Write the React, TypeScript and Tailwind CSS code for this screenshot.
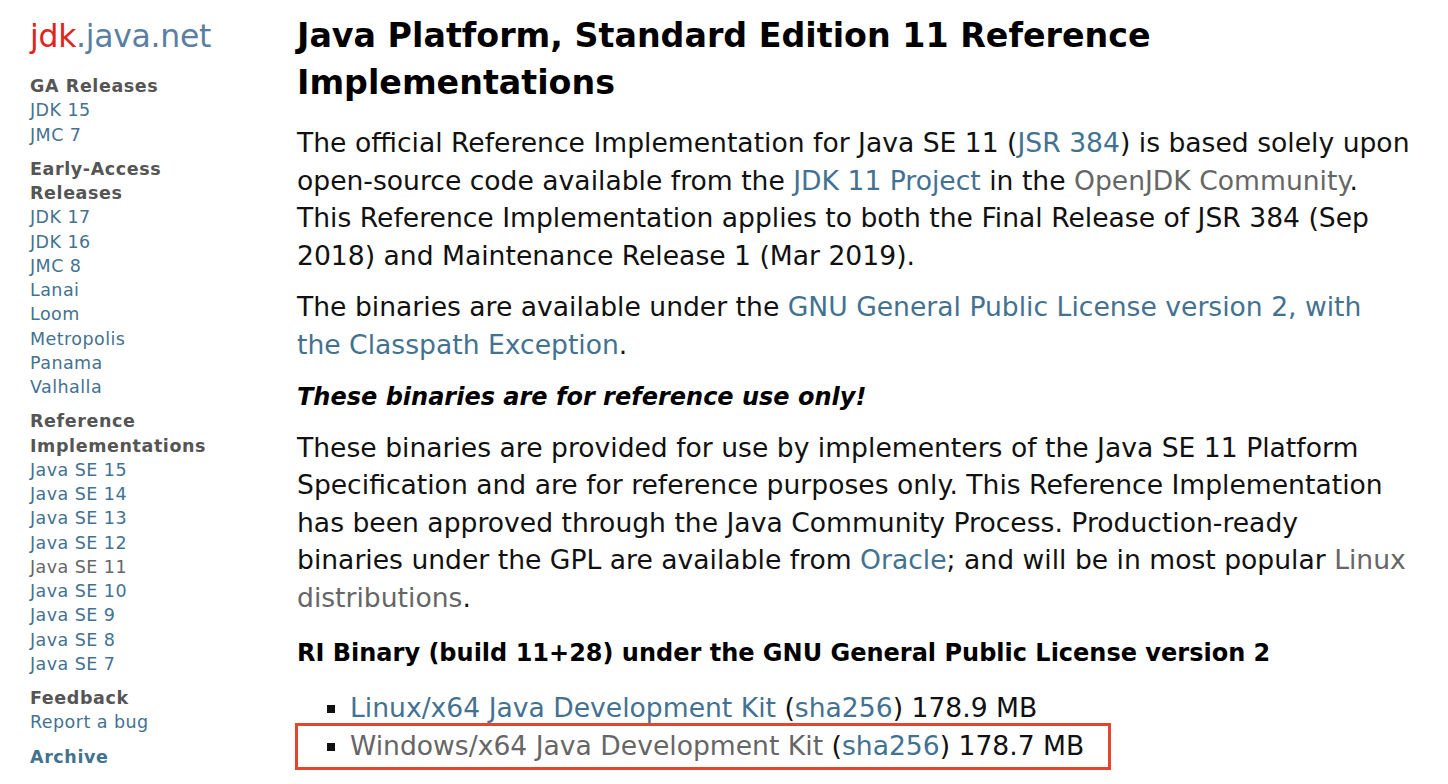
const link = "text-[#437291]";
const visited = "text-[#666666]";

const Sidebar = () => {
  const groups: { title: string[]; items: { label: string; seen?: boolean }[] }[] = [
    { title: ["GA Releases"], items: [{ label: "JDK 15" }, { label: "JMC 7" }] },
    {
      title: ["Early-Access", "Releases"],
      items: [
        { label: "JDK 17" },
        { label: "JDK 16" },
        { label: "JMC 8" },
        { label: "Lanai" },
        { label: "Loom" },
        { label: "Metropolis" },
        { label: "Panama" },
        { label: "Valhalla" },
      ],
    },
    {
      title: ["Reference", "Implementations"],
      items: [
        { label: "Java SE 15" },
        { label: "Java SE 14" },
        { label: "Java SE 13" },
        { label: "Java SE 12" },
        { label: "Java SE 11", seen: true },
        { label: "Java SE 10" },
        { label: "Java SE 9" },
        { label: "Java SE 8" },
        { label: "Java SE 7" },
      ],
    },
    { title: ["Feedback"], items: [{ label: "Report a bug" }] },
  ];

  return (
    <div className="w-[297px] shrink-0 pl-[30px] pt-[16px]">
      <div className="text-[31.5px] leading-[40px] tracking-[-0.3px]">
        <span className="text-[#e2231a]">jdk</span>
        <span className="text-[#5a7fa3]">.java.net</span>
      </div>
      <div className="mt-[18px] text-[17.5px] leading-[24.25px] tracking-[0.45px]">
        {groups.map((g) => (
          <div key={g.title[0]} className="mb-[10px]">
            {g.title.map((t) => (
              <div key={t} className="font-bold text-[#555555] tracking-[0.6px]">
                {t}
              </div>
            ))}
            {g.items.map((it) => (
              <div key={it.label} className={it.seen ? visited : link}>
                {it.label}
              </div>
            ))}
          </div>
        ))}
        <div className={`font-bold ${link} mt-[2px] tracking-[0.6px]`}>Archive</div>
      </div>
    </div>
  );
}

export default function App() {
  return (
    <div className="flex min-h-screen bg-white text-[#111111] font-['DejaVu_Sans',sans-serif]">
      <Sidebar />
      <div className="w-[1130px] pt-[12px] whitespace-nowrap">
        <h1 className="text-[33.3px] leading-[47px] font-bold text-black">
          Java Platform, Standard Edition 11 Reference
          <br />
          Implementations
        </h1>
        <div className="text-[26.6px] leading-[37.5px]">
          <p className="mt-[18px]">
            The official Reference Implementation for Java SE 11 (
            <span className={link}>JSR 384</span>) is based solely upon
            <br />
            open-source code available from the <span className={link}>JDK 11 Project</span> in
            the <span className={visited}>OpenJDK Community</span>.
            <br />
            This Reference Implementation applies to both the Final Release of JSR 384 (Sep
            <br />
            2018) and Maintenance Release 1 (Mar 2019).
          </p>
          <p className="mt-[14px]">
            The binaries are available under the{" "}
            <span className={link}>
              GNU General Public License version 2, with
              <br />
              the Classpath Exception
            </span>
            .
          </p>
          <p className="mt-[16px] text-[24px] font-bold italic text-black">
            These binaries are for reference use only!
          </p>
          <p className="mt-[12px]">
            These binaries are provided for use by implementers of the Java SE 11 Platform
            <br />
            Specification and are for reference purposes only. This Reference Implementation
            <br />
            has been approved through the Java Community Process. Production-ready
            <br />
            binaries under the GPL are available from <span className={link}>Oracle</span>; and
            will be in most popular <span className={visited}>Linux</span>
            <br />
            <span className={visited}>distributions</span>.
          </p>
          <h2 className="mt-[19px] text-[24px] font-bold text-black">
            RI Binary (build 11+28) under the GNU General Public License version 2
          </h2>
          <ul className="mt-[16px] list-[square] pl-[53px] leading-[38px]">
            <li>
              <span className={link}>Linux/x64 Java Development Kit</span> (
              <span className={link}>sha256</span>) 178.9 MB
            </li>
            <li className="relative">
              <span className={visited}>Windows/x64 Java Development Kit</span> (
              <span className={link}>sha256</span>) 178.7 MB
              <div className="absolute left-[-55px] top-[-4px] h-[47px] w-[816px] border-[3px] border-[#e4462d]" />
            </li>
          </ul>
        </div>
      </div>
    </div>
  );
}
